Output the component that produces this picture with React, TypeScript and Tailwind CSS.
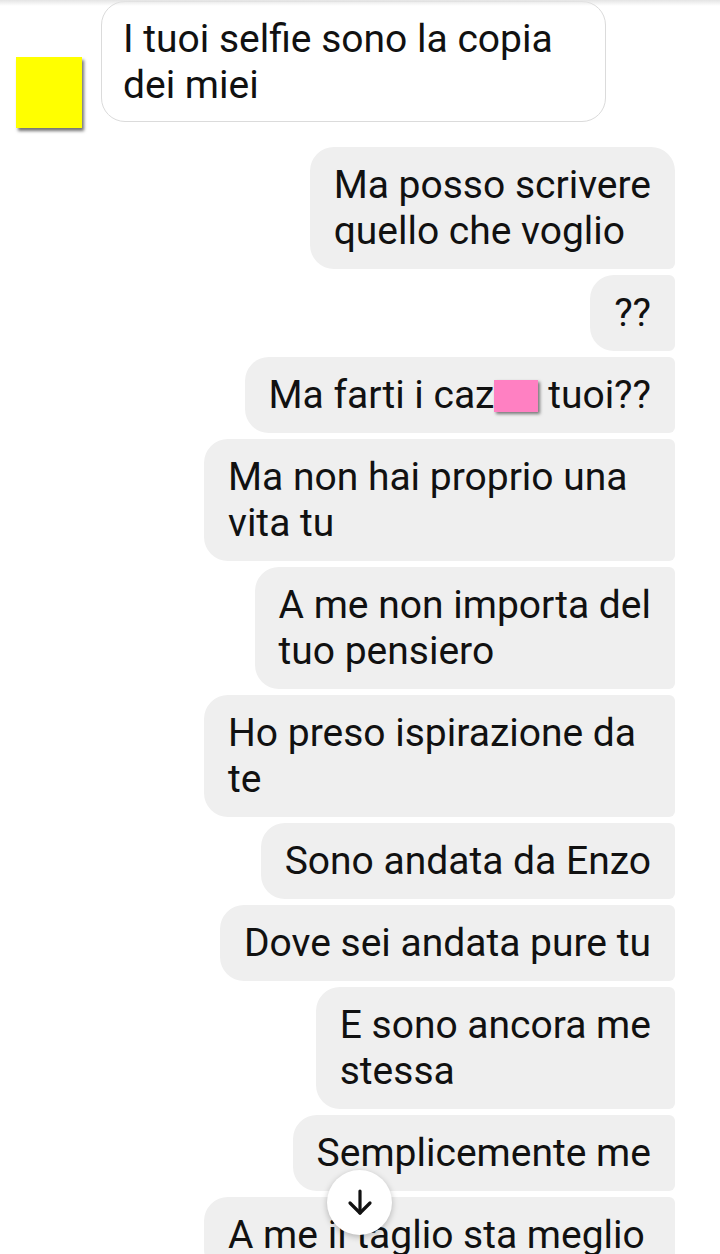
import React from "react";

const font = { fontFamily: "Roboto, 'Noto Sans', Arial, sans-serif" };

function Out({ children, first = false, wide = false }: { children: React.ReactNode; first?: boolean; wide?: boolean }) {
  return (
    <div
      className={
        "bg-[#efefef] text-[#111111] text-[39px] leading-[46px] px-[24px] py-[15px] whitespace-nowrap rounded-l-[24px] " +
        (wide ? "w-[471px] " : "w-fit ") +
        (first ? "rounded-tr-[24px] rounded-br-[6px]" : "rounded-r-[6px]")
      }
    >
      {children}
    </div>
  );
}

export default function App() {
  return (
    <div className="relative w-[720px] h-[1254px] overflow-hidden bg-white" style={font}>
      <div className="absolute top-0 left-0 right-0 h-[6px] bg-gradient-to-b from-[#e4e4e4] to-transparent z-10" />
      <div className="flex flex-col pt-[1px]">
        <div className="flex items-end pl-[16px]">
          <div className="w-[66px] h-[71px] bg-[#ffff00] shadow-[2px_3px_3px_rgba(0,0,0,0.55)] mb-[-6px]" />
          <div className="ml-[19px] w-[505px] h-[121px] border border-[#dbdbdb] rounded-[24px] bg-white text-[#111111] text-[39px] leading-[46px] px-[21px] pt-[14px] whitespace-nowrap">
            I tuoi selfie sono la copia
            <br />
            dei miei
          </div>
        </div>
        <div className="flex flex-col items-end gap-[6px] pr-[45px] mt-[25px]">
          <Out first>
            Ma posso scrivere
            <br />
            quello che voglio
          </Out>
          <Out>??</Out>
          <Out>
            Ma farti i caz
            <span className="inline-block align-[-4px] w-[44px] h-[32px] bg-[#ff80c2] shadow-[2px_2px_3px_rgba(0,0,0,0.5)]" />{" "}
            tuoi??
          </Out>
          <Out wide>
            Ma non hai proprio una
            <br />
            vita tu
          </Out>
          <Out>
            A me non importa del
            <br />
            tuo pensiero
          </Out>
          <Out wide>
            Ho preso ispirazione da
            <br />
            te
          </Out>
          <Out>Sono andata da Enzo</Out>
          <Out>Dove sei andata pure tu</Out>
          <Out>
            E sono ancora me
            <br />
            stessa
          </Out>
          <Out>Semplicemente me</Out>
          <Out wide>A me il taglio sta meglio</Out>
        </div>
      </div>
      <div className="absolute left-[327px] top-[1170px] w-[65px] h-[65px] rounded-full bg-white shadow-[0_2px_6px_rgba(0,0,0,0.25)] flex items-center justify-center z-20">
        <svg width="32" height="32" viewBox="0 0 24 24" fill="none" stroke="#111" strokeWidth="2.4" strokeLinecap="round" strokeLinejoin="round">
          <path d="M12 3v16.5" />
          <path d="M4.5 12L12 19.5l7.5-7.5" />
        </svg>
      </div>
    </div>
  );
}
